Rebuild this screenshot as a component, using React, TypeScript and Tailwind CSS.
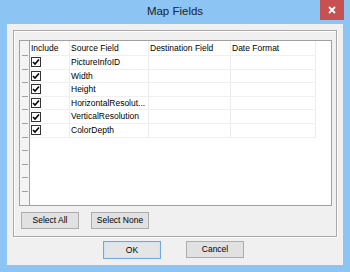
import React from 'react';

const FONT = { fontFamily: '"Segoe UI", "Liberation Sans", Arial, sans-serif' };

const fields = [
  'PictureInfoID',
  'Width',
  'Height',
  'HorizontalResolut...',
  'VerticalResolution',
  'ColorDepth',
];

function CheckBox() {
  return (
    <div className="w-[10px] h-[10px] border border-[#333] bg-white flex items-center justify-center">
      <svg width="8" height="8" viewBox="0 0 8 8">
        <path d="M1 4 L3 6 L7 1.5" fill="none" stroke="#000" strokeWidth="1.6" />
      </svg>
    </div>
  );
}

function WinButton({ label, primary }: { label: string; primary?: boolean }) {
  return (
    <button
      className={
        'w-[58px] flex items-center justify-center text-[8.5px] text-black border ' +
        (primary
          ? 'h-[18px] border-[#6fa9e3] bg-[#e5e5e5] shadow-[inset_0_0_0_1px_#cfe3f7]'
          : 'h-[17px] border-[#adadad] bg-[#e1e1e1]')
      }
    >
      {label}
    </button>
  );
}

export default function App() {
  return (
    <div className="w-[350px] h-[272px] bg-[#8cc4f4] flex flex-col overflow-hidden" style={FONT}>
      {/* Title bar */}
      <div className="relative h-[24px] flex items-center justify-center shrink-0">
        <span className="text-[11.5px] text-[#222] -mt-[1px]">Map Fields</span>
        <div className="absolute right-[6px] top-0 w-[24px] h-[20px] bg-[#c75050] flex items-center justify-center">
          <svg width="8" height="8" viewBox="0 0 8 8">
            <path d="M1 1 L7 7 M7 1 L1 7" stroke="#fff" strokeWidth="1.8" />
          </svg>
        </div>
      </div>

      {/* Client area */}
      <div className="mx-[7px] h-[241px] bg-[#f0f0f0] flex flex-col px-[6px] pt-[6px]">
        {/* Group box */}
        <div className="h-[207px] border border-[#a9a9a9] shadow-[inset_1px_1px_0_#fff,1px_1px_0_#fff] pl-[5px] pr-[4px] pt-[9px] flex flex-col">
          {/* Grid */}
          <div className="h-[166px] border border-[#a0a0a0] bg-white flex overflow-hidden">
            {/* Row header column */}
            <div className="w-[10px] bg-[#f4f4f4] border-r border-[#a0a0a0] flex flex-col shrink-0">
              <div className="h-[15px] flex items-end justify-center">
                <div className="w-[6px] h-px bg-[#a0a0a0]" />
              </div>
              {Array.from({ length: 10 }).map((_, i) => (
                <div key={i} className="h-[13.6px] flex items-end justify-center">
                  <div className="w-[6px] h-px bg-[#a0a0a0]" />
                </div>
              ))}
            </div>

            {/* Columns */}
            <div className="flex flex-col text-[8.5px] text-black">
              <div className="h-[15px] flex items-center border-b border-[#f0f0f0]">
                <div className="w-[40px] h-full pl-[1px] flex items-center border-r border-[#ececec]">Include</div>
                <div className="w-[79px] h-full pl-[1px] flex items-center border-r border-[#ececec]">Source Field</div>
                <div className="w-[82px] h-full pl-[1px] flex items-center border-r border-[#ececec]">Destination Field</div>
                <div className="w-[85px] h-full pl-[1px] flex items-center border-r border-[#ececec]">Date Format</div>
              </div>
              {fields.map((f) => (
                <div key={f} className="h-[13.6px] flex border-b border-[#f0f0f0]">
                  <div className="w-[40px] h-full pl-[1px] flex items-center border-r border-[#ececec]">
                    <CheckBox />
                  </div>
                  <div className="w-[79px] h-full pl-[1px] flex items-center border-r border-[#ececec] whitespace-nowrap overflow-hidden">
                    {f}
                  </div>
                  <div className="w-[82px] h-full border-r border-[#ececec]" />
                  <div className="w-[85px] h-full border-r border-[#ececec]" />
                </div>
              ))}
            </div>
          </div>

          {/* Select buttons */}
          <div className="flex gap-[12px] pl-[2px] pt-[6px]">
            <WinButton label="Select All" />
            <WinButton label="Select None" />
          </div>
        </div>

        {/* OK / Cancel */}
        <div className="flex gap-[25px] pl-[90px] pt-[4px]">
          <WinButton label="OK" primary />
          <WinButton label="Cancel" />
        </div>
      </div>
    </div>
  );
}
